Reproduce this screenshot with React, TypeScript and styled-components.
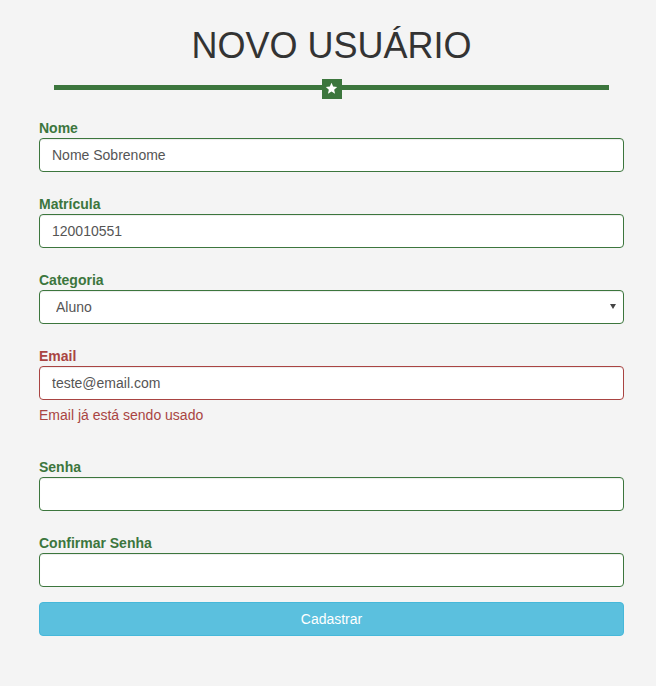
import React from "react";
import styled, { createGlobalStyle } from "styled-components";

const GlobalStyle = createGlobalStyle`
  html, body { margin: 0; padding: 0; background: #f4f4f4; }
  body {
    font-family: "Liberation Sans", Arial, Helvetica, sans-serif;
    font-size: 14px;
    line-height: 1.42857;
    color: #333;
  }
  * { box-sizing: border-box; }
`;

const Page = styled.div`
  width: 585px;
  margin-left: 39px;
  padding-top: 26px;
`;

const Title = styled.h1`
  margin: 0;
  font-size: 36px;
  font-weight: 400;
  line-height: 1.1;
  text-align: center;
  color: #333;
`;

const Divider = styled.div`
  display: flex;
  align-items: center;
  margin: 13px 15px 19px 15px;
  height: 20px;
`;

const Rule = styled.div`
  flex: 1;
  height: 5px;
  margin-top: -3px;
  background: #3c763d;
`;

const StarBox = styled.div`
  width: 20px;
  height: 20px;
  background: #3c763d;
  display: flex;
  align-items: center;
  justify-content: center;
`;

const Form = styled.form`
  display: flex;
  flex-direction: column;
`;

const Group = styled.div<{ $gap?: number }>`
  display: flex;
  flex-direction: column;
  margin-bottom: ${(p) => p.$gap ?? 22}px;
`;

const Label = styled.label<{ $error?: boolean }>`
  display: block;
  font-weight: 700;
  font-size: 14px;
  line-height: 20px;
  color: ${(p) => (p.$error ? "#a94442" : "#3c763d")};
`;

const Input = styled.input<{ $error?: boolean }>`
  display: block;
  width: 100%;
  height: 34px;
  padding: 6px 12px;
  font-family: inherit;
  font-size: 14px;
  line-height: 1.42857;
  color: #555;
  background: #fff;
  border: 1px solid ${(p) => (p.$error ? "#a94442" : "#3c763d")};
  border-radius: 4px;
  box-shadow: inset 0 1px 1px rgba(0, 0, 0, 0.075);
  outline: none;
`;

const SelectWrap = styled.div`
  position: relative;
`;

const Select = styled.select`
  display: block;
  width: 100%;
  height: 34px;
  padding: 6px 16px;
  font-family: inherit;
  font-size: 14px;
  color: #555;
  background: #fff;
  border: 1px solid #3c763d;
  border-radius: 4px;
  box-shadow: inset 0 1px 1px rgba(0, 0, 0, 0.075);
  appearance: none;
  -webkit-appearance: none;
  outline: none;
`;

const Caret = styled.span`
  position: absolute;
  right: 8px;
  top: 14px;
  width: 0;
  height: 0;
  border-left: 3px solid transparent;
  border-right: 3px solid transparent;
  border-top: 5px solid #444;
  pointer-events: none;
`;

const HelpBlock = styled.span`
  display: block;
  margin-top: 5px;
  margin-bottom: 10px;
  color: #a94442;
  line-height: 20px;
`;

const Button = styled.button`
  display: block;
  width: 100%;
  height: 34px;
  padding: 6px 12px;
  font-family: inherit;
  font-size: 14px;
  color: #fff;
  background: #5bc0de;
  border: 1px solid #46b8da;
  border-radius: 4px;
  cursor: pointer;
  margin-top: -7px;
`;

const Star = () => (
  <svg width="13" height="13" viewBox="0 0 24 24">
    <path
      fill="#fff"
      d="M12 1.5l3.1 6.9 7.4.7-5.6 5 1.7 7.4L12 17.6l-6.6 3.9 1.7-7.4-5.6-5 7.4-.7z"
    />
  </svg>
);

export default function App() {
  return (
    <>
      <GlobalStyle />
      <Page>
        <Title>NOVO USUÁRIO</Title>
        <Divider>
          <Rule />
          <StarBox>
            <Star />
          </StarBox>
          <Rule />
        </Divider>
        <Form onSubmit={(e) => e.preventDefault()}>
          <Group>
            <Label>Nome</Label>
            <Input defaultValue="Nome Sobrenome" />
          </Group>
          <Group>
            <Label>Matrícula</Label>
            <Input defaultValue="120010551" />
          </Group>
          <Group>
            <Label>Categoria</Label>
            <SelectWrap>
              <Select defaultValue="Aluno">
                <option>Aluno</option>
                <option>Professor</option>
              </Select>
              <Caret />
            </SelectWrap>
          </Group>
          <Group>
            <Label $error>Email</Label>
            <Input $error defaultValue="teste@email.com" />
            <HelpBlock>Email já está sendo usado</HelpBlock>
          </Group>
          <Group>
            <Label>Senha</Label>
            <Input type="password" />
          </Group>
          <Group>
            <Label>Confirmar Senha</Label>
            <Input type="password" />
          </Group>
          <Button type="submit">Cadastrar</Button>
        </Form>
      </Page>
    </>
  );
}
